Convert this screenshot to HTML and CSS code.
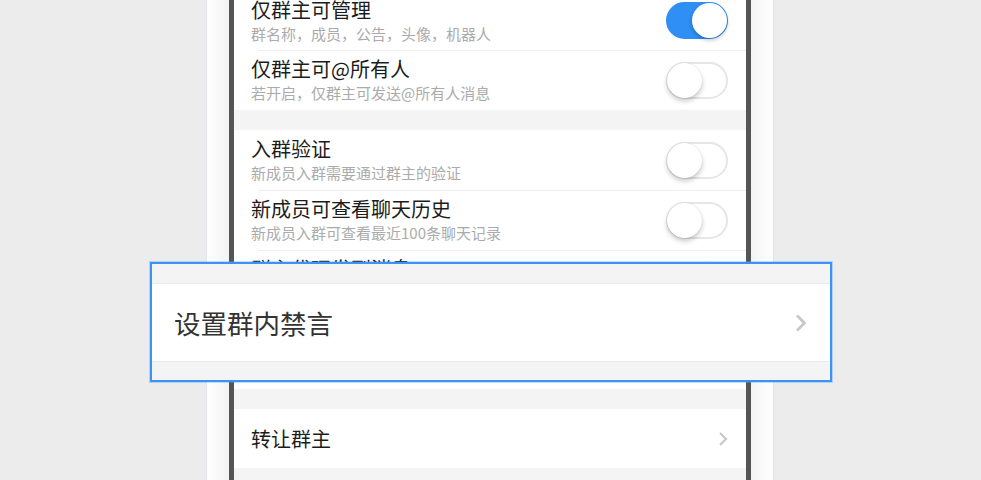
FILE: index.html
```html
<!DOCTYPE html>
<html lang="zh">
<head>
<meta charset="utf-8">
<link rel="stylesheet" href="styles.css">
</head>
<body>
<div class="page">
  <div class="phone">
    <div class="bezel">
      <div class="list">
        <div class="group">
          <div class="row first">
            <div class="text"><div class="title">仅群主可管理</div><div class="sub">群名称，成员，公告，头像，机器人</div></div>
            <span class="toggle on"><span class="knob"></span></span>
          </div>
          <div class="row sep">
            <div class="text"><div class="title">仅群主可@所有人</div><div class="sub">若开启，仅群主可发送@所有人消息</div></div>
            <span class="toggle"><span class="knob"></span></span>
          </div>
        </div>
        <div class="group">
          <div class="row">
            <div class="text"><div class="title">入群验证</div><div class="sub">新成员入群需要通过群主的验证</div></div>
            <span class="toggle"><span class="knob"></span></span>
          </div>
          <div class="row sep">
            <div class="text"><div class="title">新成员可查看聊天历史</div><div class="sub">新成员入群可查看最近100条聊天记录</div></div>
            <span class="toggle"><span class="knob"></span></span>
          </div>
          <div class="row sep">
            <div class="text"><div class="title">群主代理发到消息</div><div class="sub">群主代理发送消息提醒</div></div>
            <span class="toggle on"><span class="knob"></span></span>
          </div>
        </div>
        <div class="group">
          <div class="row single">
            <div class="label">设置群内禁言</div>
            <svg class="chev" width="10" height="16" viewBox="0 0 10 16"><path d="M2 2 L8 8 L2 14" fill="none" stroke="#c8c8cc" stroke-width="2.2"/></svg>
          </div>
        </div>
        <div class="group">
          <div class="row single">
            <div class="label">转让群主</div>
            <svg class="chev" width="10" height="16" viewBox="0 0 10 16"><path d="M2 2 L8 8 L2 14" fill="none" stroke="#c8c8cc" stroke-width="2.2"/></svg>
          </div>
        </div>
      </div>
    </div>
  </div>
  <div class="callout">
    <div class="band top"></div>
    <div class="crow">
      <div class="clabel">设置群内禁言</div>
      <svg class="cchev" width="14" height="20" viewBox="0 0 14 20"><path d="M3 2.5 L10.5 10 L3 17.5" fill="none" stroke="#c8c8cc" stroke-width="2.8"/></svg>
    </div>
    <div class="band bottom"></div>
  </div>
</div>
</body>
</html>
```
FILE: styles.css
```css
* { box-sizing: border-box; }
html, body { margin: 0; padding: 0; }
body {
  background: #ececec;
  font-family: "Noto Sans CJK SC", "Noto Sans", sans-serif;
  width: 981px;
  height: 480px;
  overflow: hidden;
}
.page { position: relative; width: 981px; height: 480px; overflow: hidden; }
.phone {
  margin-left: 206px;
  width: 568px;
  height: 480px;
  border-left: 1px solid #dfe3e8;
  border-right: 1px solid #dfe3e8;
  padding: 0 22px;
  background: linear-gradient(to right, #ffffff 0px, #f3f3f3 22px, #f3f3f3 544px, #ffffff 566px);
}
.bezel {
  height: 480px;
  border-left: 5px solid #555555;
  border-right: 5px solid #555555;
  background: #f4f4f4;
  overflow: hidden;
}
.list { margin-top: -10px; display: flex; flex-direction: column; gap: 20px; }
.group { background: #ffffff; }
.row {
  height: 60px;
  display: flex;
  align-items: center;
  justify-content: space-between;
  padding: 0 18px 0 17px;
  position: relative;
}
.row.sep::before {
  content: "";
  position: absolute;
  top: 0; left: 24px; right: 0;
  height: 1px;
  background: #efefef;
}
.row.single { height: 59px; }
.text { display: flex; flex-direction: column; align-self: flex-start; padding-top: 9px; }
.row.first .text { padding-top: 10px; }
.title { font-size: 20px; line-height: 20px; color: #1c1c1c; }
.sub { font-size: 15px; line-height: 20px; color: #ababab; margin-top: 4px; }
.label { font-size: 20px; line-height: 24px; color: #1c1c1c; }
.toggle {
  width: 62px;
  height: 37px;
  border-radius: 19px;
  border: 2px solid #e6e6e6;
  background: #ffffff;
  position: relative;
  flex: none;
}
.toggle .knob {
  position: absolute;
  left: -1px; top: -1px;
  width: 35px; height: 35px;
  border-radius: 50%;
  background: #ffffff;
  box-shadow: 0 3px 5px rgba(0,0,0,0.22), 0 0 1px rgba(0,0,0,0.15);
}
.toggle.on { background: #2f8ff5; border-color: #2f8ff5; }
.toggle.on .knob { left: auto; right: -1px; box-shadow: 0 2px 4px rgba(0,0,0,0.25); }
.callout {
  position: absolute;
  left: 150px; top: 262px;
  width: 682px; height: 120px;
  border: 2px solid #3b93f7;
  box-shadow: 0 0 0 1px rgba(80,160,250,0.35);
  background: #f4f4f4;
  display: flex;
  flex-direction: column;
}
.band.top { height: 20px; border-bottom: 1px solid #eaeaea; }
.band.bottom { flex: 1; border-top: 1px solid #eaeaea; }
.crow {
  height: 77px;
  background: #ffffff;
  display: flex;
  align-items: center;
  justify-content: space-between;
  padding: 0 22px 0 22px;
}
.clabel { font-size: 26.5px; line-height: 32px; color: #333333; }
```
